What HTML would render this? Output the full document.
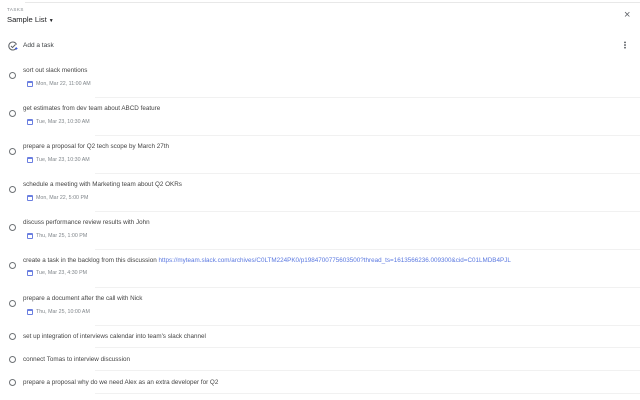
<!DOCTYPE html>
<html><head><meta charset="utf-8"><style>
*{margin:0;padding:0;box-sizing:border-box}
body{width:640px;height:400px;background:#fff;font-family:"Liberation Sans",Arial,sans-serif;color:#333;position:relative;overflow:hidden}
.a{position:absolute;white-space:nowrap}
.t{font-size:6.3px;color:#444;left:23px}
.d{font-size:5.3px;color:#80868b;left:36px}
.c{width:7px;height:7px;border:1px solid #6f7377;border-radius:50%;left:9px}
.cal{left:27px;width:6px;height:6px;border:1px solid #6b7fe0;border-top-width:2px;border-radius:1px}
.sep{left:95px;right:0;height:1px;background:#f1f1f1}
</style></head><body>
<div class="a" style="left:25px;right:0;top:2px;height:1px;background:#e8e8e8"></div>
<div class="a" style="left:7px;top:7px;font-size:4.5px;color:#80868b;letter-spacing:.5px">TASKS</div>
<div class="a" style="left:7px;top:15px;font-size:7.6px;color:#202124">Sample List <span style="font-size:5px">&#9660;</span></div>
<div class="a" style="left:624px;top:9px;font-size:11px;color:#5f6368">×</div>
<svg class="a" style="left:8px;top:41px" width="10" height="10" viewBox="0 0 10 10"><path d="M8.5 3.5A4 4 0 1 0 8.5 6.5" fill="none" stroke="#5f6368" stroke-width="1"/><path d="M3 5l1.5 1.5L7.5 3.5" fill="none" stroke="#5f6368" stroke-width="1"/><path d="M7 7.5h2.5M8.25 6.3v2.4" stroke="#3b5bdb" stroke-width="0.9"/></svg>
<div class="a" style="left:23px;top:42px;font-size:6.5px;color:#3c4043">Add a task</div>
<div class="a" style="left:624px;top:41px;width:2px;height:8px;background:radial-gradient(circle,#5f6368 0.8px,transparent 1px) 0 0/2px 2.7px"></div>

<div class="a sep" style="top:97px"></div>
<div class="a sep" style="top:135px"></div>
<div class="a sep" style="top:173px"></div>
<div class="a sep" style="top:211px"></div>
<div class="a sep" style="top:249px"></div>
<div class="a sep" style="top:287px"></div>
<div class="a sep" style="top:325px"></div>
<div class="a sep" style="top:347px"></div>
<div class="a sep" style="top:370px"></div>
<div class="a sep" style="top:393px"></div>

<div class="a c" style="top:72px"></div><div class="a t" style="top:67px">sort out slack mentions</div><div class="a cal" style="top:81px"></div><div class="a d" style="top:81px">Mon, Mar 22, 11:00 AM</div>
<div class="a c" style="top:110px"></div><div class="a t" style="top:105px">get estimates from dev team about ABCD feature</div><div class="a cal" style="top:119px"></div><div class="a d" style="top:119px">Tue, Mar 23, 10:30 AM</div>
<div class="a c" style="top:148px"></div><div class="a t" style="top:143px">prepare a proposal for Q2 tech scope by March 27th</div><div class="a cal" style="top:157px"></div><div class="a d" style="top:157px">Tue, Mar 23, 10:30 AM</div>
<div class="a c" style="top:186px"></div><div class="a t" style="top:181px">schedule a meeting with Marketing team about Q2 OKRs</div><div class="a cal" style="top:195px"></div><div class="a d" style="top:195px">Mon, Mar 22, 5:00 PM</div>
<div class="a c" style="top:224px"></div><div class="a t" style="top:219px">discuss performance review results with John</div><div class="a cal" style="top:233px"></div><div class="a d" style="top:233px">Thu, Mar 25, 1:00 PM</div>
<div class="a c" style="top:262px"></div><div class="a t" style="top:257px">create a task in the backlog from this discussion <span style="color:#5a78e0">https://myteam.slack.com/archives/C0LTM224PK0/p1984700775603500?thread_ts=1613566236.009300&amp;cid=C01LMDB4PJL</span></div><div class="a cal" style="top:270px"></div><div class="a d" style="top:270px">Tue, Mar 23, 4:30 PM</div>
<div class="a c" style="top:300px"></div><div class="a t" style="top:295px">prepare a document after the call with Nick</div><div class="a cal" style="top:309px"></div><div class="a d" style="top:309px">Thu, Mar 25, 10:00 AM</div>
<div class="a c" style="top:333px"></div><div class="a t" style="top:333px">set up integration of interviews calendar into team's slack channel</div>
<div class="a c" style="top:356px"></div><div class="a t" style="top:356px">connect Tomas to interview discussion</div>
<div class="a c" style="top:379px"></div><div class="a t" style="top:379px">prepare a proposal why do we need Alex as an extra developer for Q2</div>
</body></html>
